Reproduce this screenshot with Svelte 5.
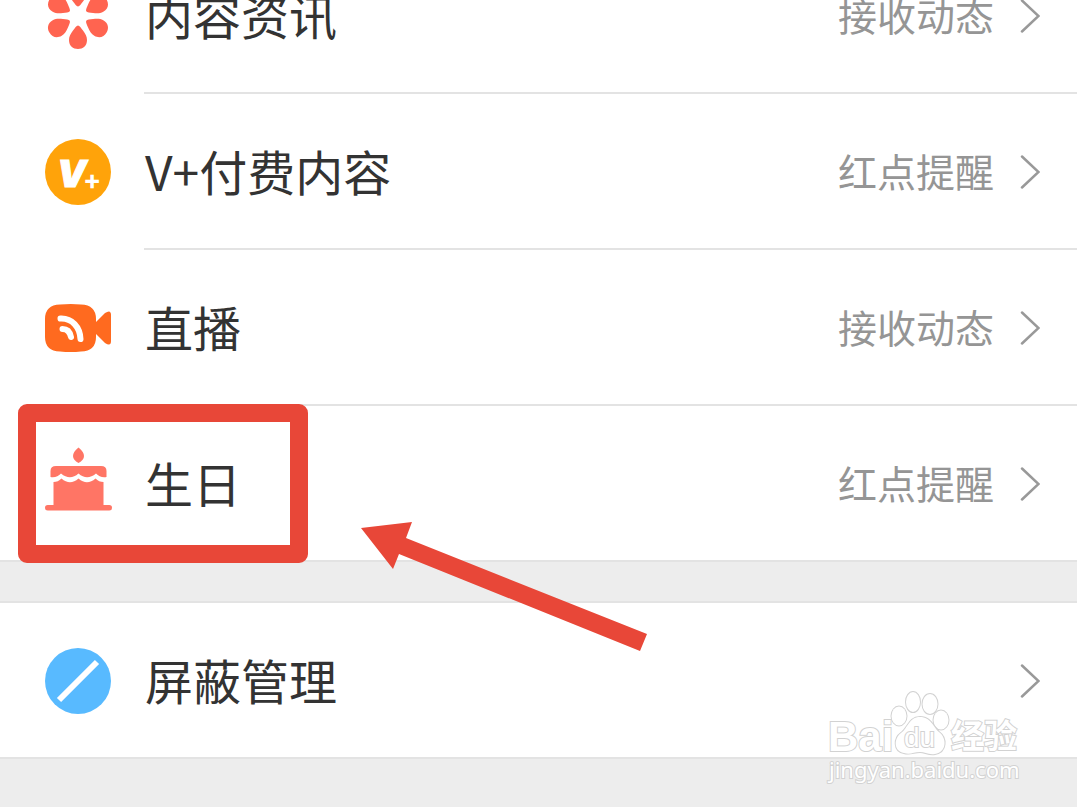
<script lang="ts">
	type Item = { icon: string; label: string; status?: string; marked?: boolean };

	const groups: Item[][] = [
		[
			{ icon: 'flower', label: '内容资讯', status: '接收动态' },
			{ icon: 'vplus', label: 'V+付费内容', status: '红点提醒' },
			{ icon: 'live', label: '直播', status: '接收动态' },
			{ icon: 'cake', label: '生日', status: '红点提醒', marked: true },
		],
		[{ icon: 'block', label: '屏蔽管理' }],
	];

	const petals = [0, 60, 120, 180, 240, 300];
</script>

{#snippet glyph(name: string)}
	<svg class="icon" viewBox="0 0 66 66" aria-hidden="true">
		{#if name === 'flower'}
			{#each petals as angle}
				<path
					fill="#ff6450"
					transform="rotate({angle} 33 33)"
					d="M33 42.500C34.500 42.500 36 45 38 47.500C40.500 51 42 53.500 42 57C42 63 38 66 33 66S24 63 24 57C24 53.500 25.500 51 28 47.500C30 45 31.500 42.500 33 42.500Z"
				/>
			{/each}
		{:else if name === 'vplus'}
			<circle cx="33" cy="33" r="33" fill="#ffa30a" />
			<text class="v" x="12" y="48">V</text>
			<text class="plus" x="38" y="50">+</text>
		{:else if name === 'live'}
			<path
				fill="#ff6a1f"
				d="M15 9.500Q26 8.500 36 9.500Q51 10 51 24V42Q51 56 36 56.500Q26 57.500 15 56.500Q0 56 0 42V24Q0 10 15 9.500Z"
			/>
			<path fill="#ff6a1f" d="M50 28L60 18Q66 14 66 20V46Q66 52 60 48L50 38Z" />
			<g fill="none" stroke="#fff" stroke-width="6" stroke-linecap="round">
				<path d="M15.500 23.500C27 23 35 32 35.500 44" />
				<path d="M17.500 34C22 34 25 37 26 42" />
			</g>
		{:else if name === 'cake'}
			<g fill="#ff7565">
				<path d="M33.500 -3.500Q39 1 39 5Q39 9 33.500 12Q28 9 28 5Q28 1 33.500 -3.500Z" />
				<path
					d="M5.500 26V20Q5.500 15 11 15H56Q61.500 15 61.500 20V26Q55 27 51 22.500Q42 30 33.500 22.500Q25 30 16 22.500Q12 27 5.500 26Z"
				/>
				<path d="M8.500 31Q13 31 16.500 27.500Q25 35 33.500 27.500Q42 35 50.500 27.500Q54 31 58.500 31V55H8.500Z" />
				<rect x="0" y="54" width="67" height="5.500" rx="2.750" />
			</g>
		{:else}
			<circle cx="33" cy="33" r="33" fill="#58baff" />
			<path d="M14 52L52 14" stroke="#fff" stroke-width="6" />
		{/if}
	</svg>
{/snippet}

<main class="page">
	{#each groups as items}
		<ul class="group">
			{#each items as item}
				<li class="item">
					<button class="row">
						{@render glyph(item.icon)}
						<span class="label">{item.label}</span>
						{#if item.status}
							<span class="status">{item.status}</span>
						{/if}
						<svg class="chevron" viewBox="0 0 20 34" aria-hidden="true">
							<path d="M2 1.500L18.500 17L2 32.500" />
						</svg>
					</button>
					{#if item.marked}
						<div class="mark"></div>
						<svg class="arrow" viewBox="0 0 286 129" aria-hidden="true">
							<path d="M0 6L51 0L45 16L286 112L279 129L38 32L32 47Z" />
						</svg>
					{/if}
				</li>
			{/each}
		</ul>
	{/each}

	<svg class="watermark" viewBox="0 0 200 96" aria-label="Baidu 经验">
		<text class="wm-latin" x="2" y="60">Bai</text>
		<g class="paw">
			<ellipse cx="73" cy="25" rx="7.500" ry="9.500" />
			<ellipse cx="87" cy="11" rx="7" ry="10" />
			<ellipse cx="104" cy="13" rx="7.500" ry="10" />
			<ellipse cx="115" cy="29" rx="7.500" ry="9.500" />
			<path d="M94 26C105 26 107 36 113 41C121 47 121 61 109 63C102 64 99 61 94 61C88 61 84 64 78 62C67 60 68 47 75 42C82 37 83 26 94 26Z" />
		</g>
		<text class="wm-du" x="78" y="56">du</text>
		<text class="wm-cjk" x="125" y="57">经验</text>
		<text class="wm-url" x="3" y="87">jingyan.baidu.com</text>
	</svg>
</main>

<style>
	:global(body) {
		background: #ededed;
	}

	.page {
		position: relative;
		min-height: 100vh;
		overflow: hidden;
		background: #ededed;
		font-family: 'Noto Sans CJK SC', sans-serif;
	}

	.group {
		margin: 0;
		padding: 0;
		list-style: none;
		background: #fff;
	}

	/* list is scrolled part of the way past its first row */
	.group:first-child {
		margin-top: -62px;
	}

	.group + .group {
		margin-top: 39px;
		border-top: 2px solid #e3e3e3;
	}

	.item {
		position: relative;
	}

	.row {
		display: flex;
		align-items: center;
		width: 100%;
		height: 156px;
		padding: 0 37px 0 45px;
		border: 0;
		background: none;
		font: inherit;
		text-align: left;
	}

	.item::after {
		content: '';
		position: absolute;
		left: 144px;
		right: 0;
		bottom: 0;
		height: 2px;
		background: #e3e3e3;
	}

	.item:last-child::after {
		left: 0;
	}

	.icon {
		flex: none;
		width: 66px;
		height: 66px;
		margin-right: 34px;
		overflow: visible;
	}

	.v,
	.plus {
		fill: #fff;
		font-family: Inter, sans-serif;
		font-weight: 900;
	}

	.v {
		font-size: 37px;
		font-style: italic;
		stroke: #fff;
		stroke-width: 1;
	}

	.plus {
		font-size: 27px;
		font-weight: 700;
	}

	.label,
	.status {
		padding-bottom: 4px;
	}

	.label {
		flex: 1;
		font-size: 48px;
		line-height: 64px;
		color: #333;
	}

	.status {
		font-size: 39px;
		line-height: 52px;
		color: #959595;
	}

	.chevron {
		width: 20px;
		height: 34px;
		margin-left: 26px;
		fill: none;
		stroke: #999;
		stroke-width: 2.5;
		stroke-linecap: round;
	}

	.mark {
		position: absolute;
		z-index: 1;
		left: 18px;
		top: -2px;
		width: 290px;
		height: 159px;
		box-sizing: border-box;
		border: 18px solid #e84738;
		border-radius: 9px;
		pointer-events: none;
	}

	.arrow {
		position: absolute;
		z-index: 1;
		left: 361px;
		top: 116px;
		width: 286px;
		height: 129px;
		fill: #e84738;
		pointer-events: none;
	}

	.watermark {
		position: absolute;
		right: 51px;
		bottom: 20px;
		width: 200px;
		height: 96px;
		overflow: visible;
		fill: #fff;
		stroke: #d2d2d2;
		stroke-width: 2;
		paint-order: stroke;
		pointer-events: none;
	}

	.wm-latin {
		font: bold 42px 'Liberation Sans', sans-serif;
	}

	.wm-du {
		font: 28px 'Liberation Sans', sans-serif;
	}

	.wm-cjk {
		font: bold 33px 'Noto Sans CJK SC', sans-serif;
	}

	.wm-url {
		font: 22px 'Noto Sans', sans-serif;
	}
</style>
